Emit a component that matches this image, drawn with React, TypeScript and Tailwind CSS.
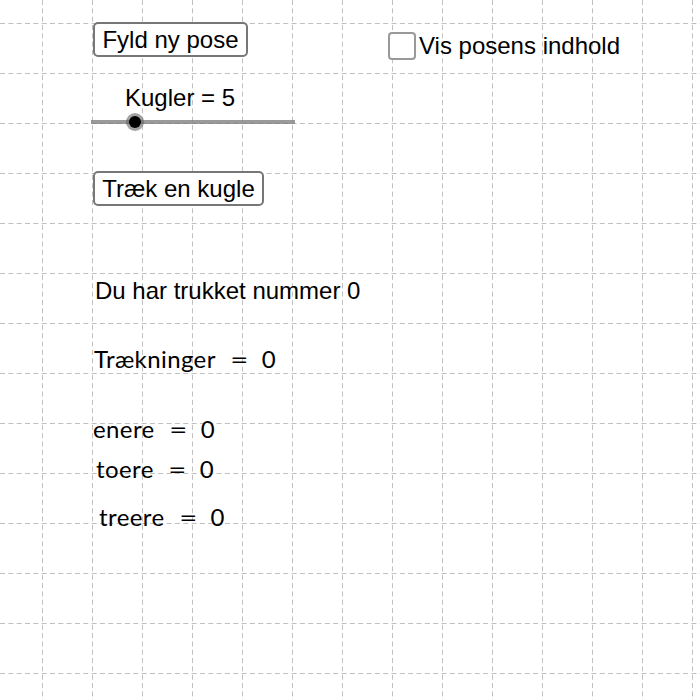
import React from "react";

const sans = "font-['Liberation_Sans',Arial,sans-serif]";
const math = "font-['Lato','Liberation_Sans',sans-serif]";

function Grid() {
  const xs = Array.from({ length: 14 }, (_, i) => 42.5 + i * 50);
  const ys = Array.from({ length: 14 }, (_, i) => 23.5 + i * 50);
  return (
    <svg className="absolute inset-0 pointer-events-none" width={700} height={700}>
      {xs.map((x) => (
        <line key={"v" + x} x1={x} y1={0} x2={x} y2={700} stroke="#c0c0c0" strokeDasharray="5 3.33" />
      ))}
      {ys.map((y) => (
        <line key={"h" + y} x1={0} y1={y} x2={700} y2={y} stroke="#c0c0c0" strokeDasharray="5 3.33" />
      ))}
    </svg>
  );
}

function GgbButton({ label, width }: { label: string; width: string }) {
  return (
    <button
      className={`${width} h-[35px] shrink-0 bg-white border-2 border-[#777] rounded-[5px] text-[24px] leading-[28px] text-black text-center`}
    >
      {label}
    </button>
  );
}

function Eq({ name, value, className }: { name: string; value: string; className: string }) {
  return (
    <div className={`${math} text-[24px] leading-[28px] tracking-[0.4px] text-black flex items-baseline ${className}`}>
      <span>{name}</span>
      <span className="inline-block w-[17px] text-center scale-x-[1.3] ml-[15px] mr-[14px]">=</span>
      <span>{value}</span>
    </div>
  );
}

export default function App() {
  return (
    <div className={`relative w-[700px] h-[700px] bg-white overflow-hidden ${sans}`}>
      <Grid />
      <div className="relative pl-[93px] pt-[22px] flex flex-col items-start">
        {/* top row: button + checkbox */}
        <div className="flex items-start">
          <GgbButton label="Fyld ny pose" width="w-[155px]" />
          <label className="ml-[140px] mt-[10px] flex items-center gap-[3px] text-[24px] leading-[28px] text-black">
            <span className="w-[28px] h-[28px] bg-white border-2 border-[#999] rounded-[4px]" />
            <span>Vis posens indhold</span>
          </label>
        </div>

        {/* slider */}
        <div className="ml-[32px] mt-[24px] text-[24px] leading-[28px] text-black">Kugler = 5</div>
        <div className="relative -ml-[2px] mt-[1px] w-[204px] h-[18px] flex items-center">
          <div className="w-full h-[4px] bg-[rgba(120,120,120,0.75)]" />
          <div className="absolute left-[35px] top-0 w-[18px] h-[18px] rounded-full bg-[rgba(100,100,100,0.6)] flex items-center justify-center">
            <div className="w-[12px] h-[12px] rounded-full bg-black" />
          </div>
        </div>

        <div className="mt-[40px]">
          <GgbButton label="Træk en kugle" width="w-[171px]" />
        </div>

        <div className="ml-[2px] mt-[71px] text-[24px] leading-[28px] text-black">Du har trukket nummer 0</div>

        <Eq name="Trækninger" value="0" className="mt-[40px] ml-[1px]" />
        <Eq name="enere" value="0" className="mt-[42px]" />
        <Eq name="toere" value="0" className="mt-[12px] ml-[3px]" />
        <Eq name="treere" value="0" className="mt-[20px] ml-[6px]" />
      </div>
    </div>
  );
}
